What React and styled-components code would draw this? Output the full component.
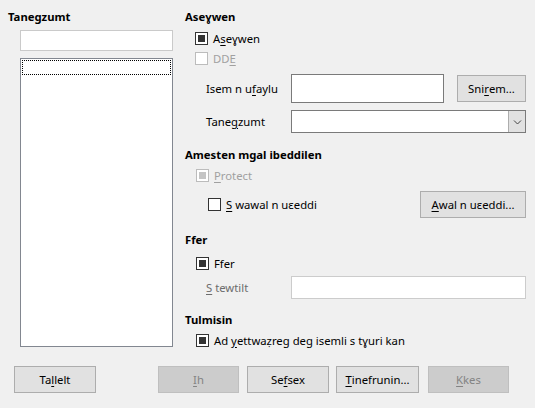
import styled, { createGlobalStyle } from "styled-components";

const GlobalStyle = createGlobalStyle`
	html, body {
		margin: 0;
		padding: 0;
		background: #f0f0f0;
	}
	body {
		font-family: "Noto Sans", "Open Sans", sans-serif;
		font-size: 11.3px;
		color: #000;
	}
`;

const Dialog = styled.div`
	width: 535px;
	height: 408px;
	background: #f0f0f0;
	display: flex;
	flex-direction: column;
	box-sizing: border-box;
`;

const Main = styled.div`
	display: flex;
	height: 366px;
`;

const LeftPanel = styled.div`
	width: 178px;
	display: flex;
	flex-direction: column;
	padding-left: 8px;
	box-sizing: border-box;
`;

const RightPanel = styled.div`
	flex: 1;
	display: flex;
	flex-direction: column;
	padding-left: 8px;
	padding-right: 9px;
`;

const Heading = styled.div`
	font-weight: bold;
	height: 18px;
	line-height: 18px;
	margin-top: ${(p) => p.$top}px;
`;

const SearchBox = styled.div`
	margin: 4px 0 0 12px;
	width: 153px;
	height: 21px;
	box-sizing: border-box;
	background: #fff;
	border: 1px solid #cacaca;
`;

const ListBox = styled.div`
	margin: 7px 0 0 12px;
	width: 153px;
	height: 289px;
	box-sizing: border-box;
	background: #fff;
	border: 1px solid #828790;
	padding: 1px;
`;

const FocusRow = styled.div`
	height: 15px;
	border: 1px dotted #000;
	box-sizing: border-box;
`;

const Row = styled.div`
	display: flex;
	align-items: center;
	height: ${(p) => p.$h}px;
	margin-top: ${(p) => p.$top}px;
	padding-left: ${(p) => p.$indent}px;
`;

const Check = styled.span`
	width: 13px;
	height: 13px;
	box-sizing: border-box;
	border: 1px solid ${(p) => (p.$disabled ? "#bcbcbc" : "#333")};
	background: #fff;
	display: inline-flex;
	align-items: center;
	justify-content: center;
	margin-right: 5px;
	flex-shrink: 0;
	&::after {
		content: "";
		display: ${(p) => (p.$checked ? "block" : "none")};
		width: 7px;
		height: 7px;
		background: ${(p) => (p.$disabled ? "#c4c4c4" : "#333")};
	}
`;

const Label = styled.span`
	color: ${(p) => (p.$disabled ? "#a0a0a0" : "#000")};
	white-space: nowrap;
`;

const FieldLabel = styled.span`
	width: 85px;
	flex-shrink: 0;
	color: ${(p) => (p.$dim ? "#6d6d6d" : "#000")};
	white-space: nowrap;
`;

const Input = styled.div`
	width: ${(p) => p.$w}px;
	height: ${(p) => p.$h}px;
	box-sizing: border-box;
	background: #fff;
	border: 1px solid ${(p) => (p.$disabled ? "#cccccc" : "#7a7a7a")};
`;

const Select = styled.div`
	flex: 1;
	height: 23px;
	box-sizing: border-box;
	background: #fff;
	border: 1px solid #7a7a7a;
	display: flex;
	justify-content: flex-end;
`;

const SelectArrow = styled.div`
	width: 16px;
	background: #e1e1e1;
	border-left: 1px solid #adadad;
	display: flex;
	align-items: center;
	justify-content: center;
`;

const Spacer = styled.div`
	flex: 1;
`;

const Button = styled.div`
	width: ${(p) => p.$w}px;
	height: 27px;
	box-sizing: border-box;
	background: ${(p) => (p.$disabled ? "#cccccc" : "#e1e1e1")};
	border: 1px solid ${(p) => (p.$disabled ? "#bfbfbf" : "#adadad")};
	color: ${(p) => (p.$disabled ? "#838383" : "#000")};
	display: flex;
	align-items: center;
	justify-content: center;
	white-space: nowrap;
	margin-left: ${(p) => p.$ml || 0}px;
`;

const U = styled.span`
	text-decoration: underline;
	text-underline-offset: 2px;
`;

const Footer = styled.div`
	display: flex;
	padding-left: 14px;
`;

const Chevron = () => (
	<svg width="9" height="6" viewBox="0 0 9 6">
		<path d="M1 1.5 L4.5 5 L8 1.5" fill="none" stroke="#444" strokeWidth="1" />
	</svg>
);

const App = () => {
	return (
		<>
			<GlobalStyle />
			<Dialog>
				<Main>
					<LeftPanel>
						<Heading $top={8}>Tanegzumt</Heading>
						<SearchBox />
						<ListBox>
							<FocusRow />
						</ListBox>
					</LeftPanel>
					<RightPanel>
						<Heading $top={8}>Aseɣwen</Heading>
						<Row $h={16} $top={4} $indent={10}>
							<Check $checked />
							<Label>
								A<U>s</U>eɣwen
							</Label>
						</Row>
						<Row $h={16} $top={4} $indent={10}>
							<Check $disabled />
							<Label $disabled>
								DD<U>E</U>
							</Label>
						</Row>
						<Row $h={29} $top={8} $indent={21}>
							<FieldLabel>
								Isem n u<U>f</U>aylu
							</FieldLabel>
							<Input $w={153} $h={29} />
							<Spacer />
							<Button $w={69}>
								Sni<U>r</U>em...
							</Button>
						</Row>
						<Row $h={23} $top={7} $indent={21}>
							<FieldLabel>
								Tane<U>g</U>zumt
							</FieldLabel>
							<Select>
								<SelectArrow>
									<Chevron />
								</SelectArrow>
							</Select>
						</Row>
						<Heading $top={13}>Amesten mgal ibeddilen</Heading>
						<Row $h={16} $top={3} $indent={11}>
							<Check $checked $disabled />
							<Label $disabled>
								<U>P</U>rotect
							</Label>
						</Row>
						<Row $h={27} $top={8} $indent={23}>
							<Check />
							<Label>
								<U>S</U> wawal n uɛeddi
							</Label>
							<Spacer />
							<Button $w={106}>
								<U>A</U>wal n uɛeddi...
							</Button>
						</Row>
						<Heading $top={13}>Ffer</Heading>
						<Row $h={16} $top={6} $indent={11}>
							<Check $checked />
							<Label>Ffer</Label>
						</Row>
						<Row $h={23} $top={5} $indent={21}>
							<FieldLabel $dim>
								<U>S</U> tewtilt
							</FieldLabel>
							<Input $w={235} $h={23} $disabled />
						</Row>
						<Heading $top={12}>Tulmisin</Heading>
						<Row $h={16} $top={3} $indent={11}>
							<Check $checked />
							<Label>
								Ad <U>y</U>ettwaẓreg deg isemli s tɣuri kan
							</Label>
						</Row>
					</RightPanel>
				</Main>
				<Footer>
					<Button $w={82}>
						Ta<U>l</U>lelt
					</Button>
					<Button $w={81} $ml={62} $disabled>
						<U>I</U>h
					</Button>
					<Button $w={82} $ml={8}>
						Se<U>f</U>sex
					</Button>
					<Button $w={83} $ml={7}>
						<U>T</U>inefrunin...
					</Button>
					<Button $w={81} $ml={9} $disabled>
						<U>K</U>kes
					</Button>
				</Footer>
			</Dialog>
		</>
	);
};

export default App;
